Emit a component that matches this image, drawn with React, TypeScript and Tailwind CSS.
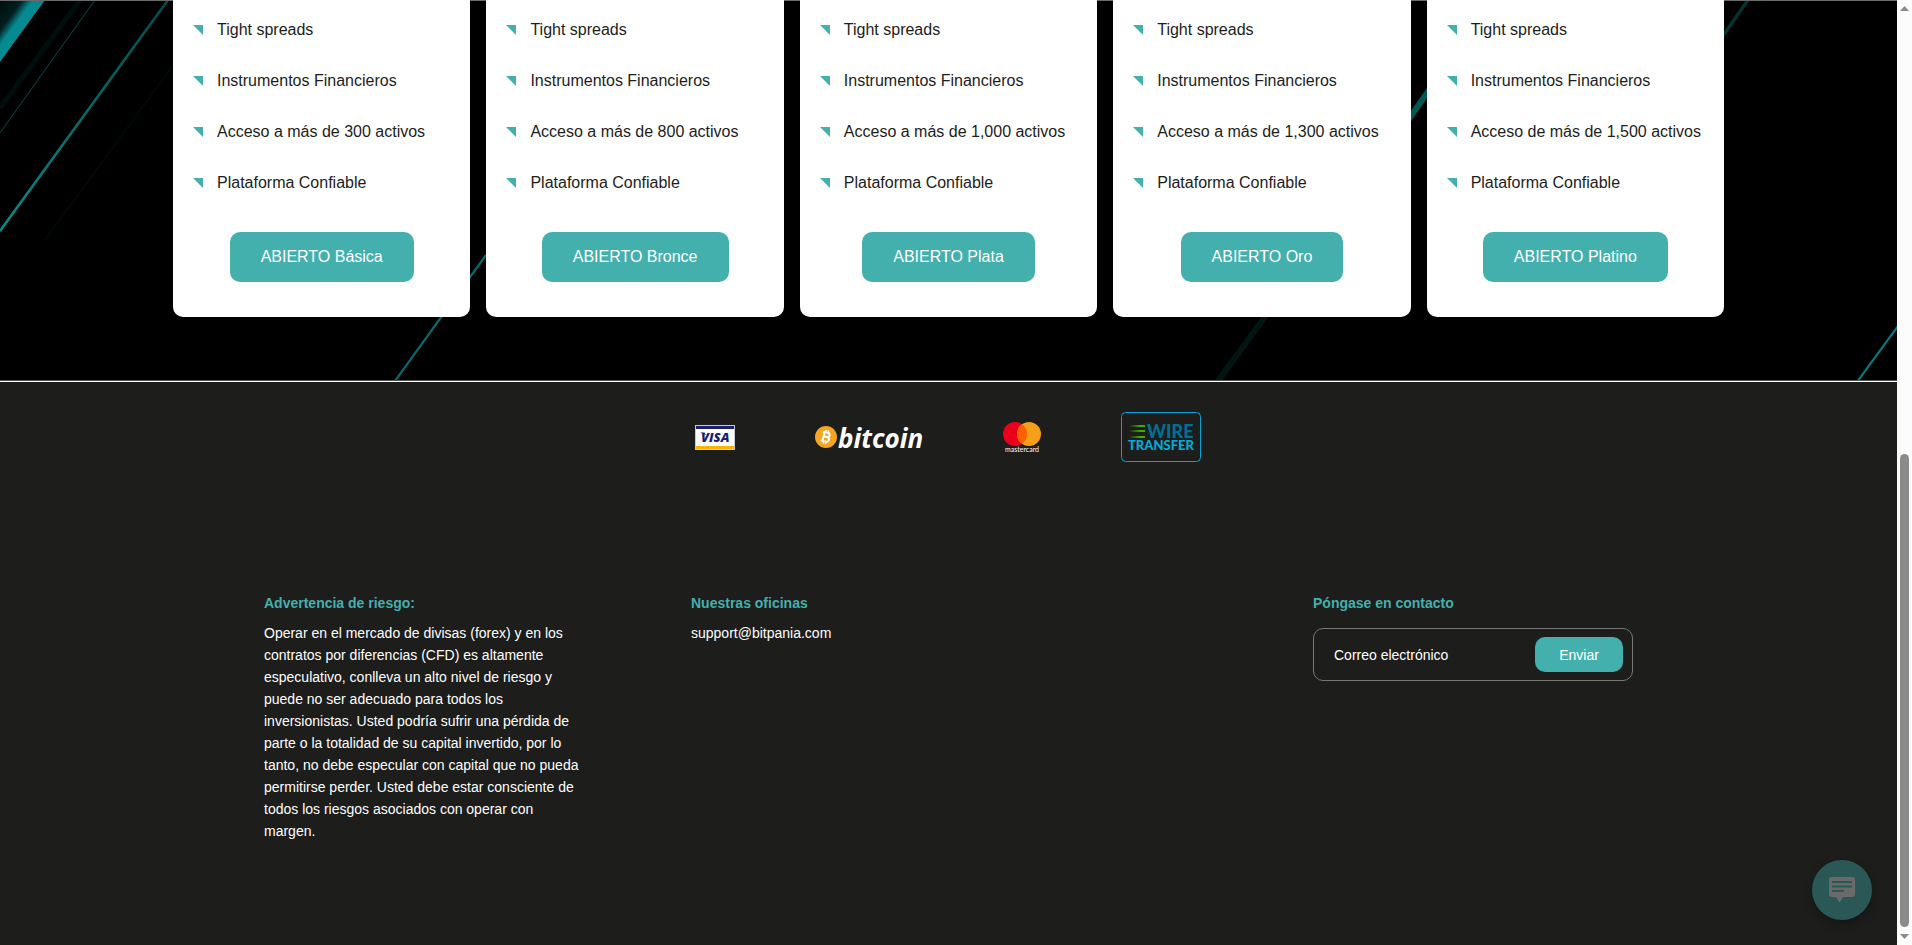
import { useState } from 'react';

const accounts = [
  { name: 'Básica', assets: 'Acceso a más de 300 activos' },
  { name: 'Bronce', assets: 'Acceso a más de 800 activos' },
  { name: 'Plata', assets: 'Acceso a más de 1,000 activos' },
  { name: 'Oro', assets: 'Acceso a más de 1,300 activos' },
  { name: 'Platino', assets: 'Acceso de más de 1,500 activos' },
];

const riskWarning =
  'Operar en el mercado de divisas (forex) y en los contratos por diferencias (CFD) es altamente especulativo, conlleva un alto nivel de riesgo y puede no ser adecuado para todos los inversionistas. Usted podría sufrir una pérdida de parte o la totalidad de su capital invertido, por lo tanto, no debe especular con capital que no pueda permitirse perder. Usted debe estar consciente de todos los riesgos asociados con operar con margen.';

function LightStreaks() {
  return (
    <svg
      className="absolute inset-0 h-full w-full"
      viewBox="0 0 1897 380"
      preserveAspectRatio="xMinYMin slice"
      aria-hidden="true"
    >
      <defs>
        <linearGradient id="beam" gradientUnits="userSpaceOnUse" x1="168" y1="0" x2="0" y2="231">
          <stop offset="0" stopColor="#064a49" />
          <stop offset="1" stopColor="#078a88" />
        </linearGradient>
        <linearGradient id="glow" gradientUnits="userSpaceOnUse" x1="0" y1="0" x2="29" y2="21">
          <stop offset="0" stopColor="#000b0b" />
          <stop offset="0.5" stopColor="#011f20" />
          <stop offset="0.75" stopColor="#058a92" />
          <stop offset="1" stopColor="#058a92" />
        </linearGradient>
      </defs>
      <polygon points="0,0 45,0 0,62" fill="url(#glow)" />
      <path d="M80 0L0 108" stroke="#000e0e" strokeWidth="5" />
      <path d="M95 0L0 133" stroke="#063a39" strokeWidth="1.2" />
      <path d="M172 67L45 240" stroke="#000a0a" strokeWidth="1.5" />
      <path d="M168 0L0 231" stroke="url(#beam)" strokeWidth="2.6" />
      <path d="M486 255L395 381" stroke="#066a70" strokeWidth="2.2" />
      <path d="M1267 314L1218 381" stroke="#011514" strokeWidth="6" />
      <path d="M1434 83L1404 126" stroke="#015752" strokeWidth="6" />
      <path d="M1748 0L1720 40" stroke="#043331" strokeWidth="3.5" />
      <path d="M1898 326L1857 382" stroke="#05777f" strokeWidth="2.2" />
      <path d="M0 0.5H1897" stroke="#6b6b6b" />
    </svg>
  );
}

function VisaLogo() {
  return (
    <svg width="40" height="25" viewBox="0 0 40 25" role="img" aria-label="Visa">
      <rect width="40" height="25" fill="#c9c9d2" />
      <rect x="1" y="1" width="38" height="23" fill="#fff" />
      <rect x="1" y="1" width="38" height="3" fill="#1a1f71" />
      <rect x="1" y="21" width="38" height="3" fill="#f7b600" />
      <text x="6" y="17" fontFamily="Open Sans, sans-serif" fontSize="13" fontWeight="800" fontStyle="italic" fill="#1a1f71">
        VISA
      </text>
      <path d="M5 7.5h4.500l1.500 2.500z" fill="#1a1f71" />
    </svg>
  );
}

function BitcoinLogo() {
  return (
    <svg width="108" height="25" viewBox="0 0 108 25" className="overflow-visible" role="img" aria-label="bitcoin">
      <circle cx="11" cy="12" r="11" fill="#f4a521" />
      <g transform="rotate(13 11 12)" fill="none" stroke="#fff">
        <path d="M8.500 7.500v9M6.500 7.500h5.200c3.200 0 3.200 4.300 0 4.300H8.500M11.700 11.800c3.800 0 3.800 4.700 0 4.700H6.500" strokeWidth="2" />
        <path d="M9.600 5v2.500M12 5v2.500M9.600 16.500v2.500M12 16.500v2.500" strokeWidth="1.400" />
      </g>
      <text x="23" y="23" fontFamily="Noto Sans, sans-serif" fontSize="26" fontWeight="700" fontStyle="italic" fill="#fff">
        bitcoin
      </text>
    </svg>
  );
}

function MastercardLogo() {
  return (
    <svg width="38" height="30" viewBox="0 0 38 30" className="overflow-visible" role="img" aria-label="mastercard">
      <circle cx="12" cy="12" r="12" fill="#eb001b" />
      <circle cx="26" cy="12" r="12" fill="#f79e1b" />
      <path d="M19 2.250a12 12 0 0 1 0 19.500a12 12 0 0 1 0-19.500z" fill="#ff5f00" />
      <text x="2" y="30" fontFamily="Lato, sans-serif" fontSize="7" fill="#fff">
        mastercard
      </text>
    </svg>
  );
}

function WireTransferLogo() {
  return (
    <svg width="80" height="50" viewBox="0 0 80 50" role="img" aria-label="Wire Transfer">
      <defs>
        <linearGradient id="dash" x1="0" x2="1">
          <stop offset="0" stopColor="#3fae00" stopOpacity="0" />
          <stop offset="0.7" stopColor="#3fae00" />
        </linearGradient>
      </defs>
      <rect x="0.500" y="0.500" width="79" height="49" rx="4" fill="none" stroke="#00a5d9" />
      <rect x="8" y="13" width="16" height="2" fill="url(#dash)" />
      <rect x="8" y="18" width="16" height="2" fill="url(#dash)" />
      <rect x="8" y="24" width="16" height="2" fill="url(#dash)" />
      <text fontFamily="Lato, sans-serif" fontWeight="900">
        <tspan x="26" y="26" fontSize="18" fill="#006f96">WIRE</tspan>
        <tspan x="7" y="38" fontSize="13" fill="#00acd9">TRANSFER</tspan>
      </text>
    </svg>
  );
}

function AccountCard({ name, assets }: { name: string; assets: string }) {
  const features = ['Tight spreads', 'Instrumentos Financieros', assets, 'Plataforma Confiable'];

  return (
    <article className="flex flex-1 flex-col items-center rounded-b-[10px] bg-white px-5 pt-[18px] pb-[35px]">
      <ul className="flex w-full flex-col gap-[27px]">
        {features.map((feature) => (
          <li key={feature} className="flex items-center gap-3.5 text-base whitespace-nowrap text-[#1d1d1b]">
            <svg width="10" height="10" viewBox="0 0 10 10" className="shrink-0" aria-hidden="true">
              <path d="M0 0h10v10z" fill="#43b0ae" />
            </svg>
            {feature}
          </li>
        ))}
      </ul>
      <button className="mt-[37px] h-[50px] rounded-[10px] bg-[#43b0ae] px-[31px] text-base text-white">
        ABIERTO {name}
      </button>
    </article>
  );
}

export default function App() {
  const [email, setEmail] = useState('');

  return (
    <div className="flex min-h-screen bg-[#1d1d1b] font-['Liberation_Sans',Arial,sans-serif]">
      <div className="flex min-w-0 flex-1 flex-col">
        {/* Account types */}
        <section className="relative bg-black pb-[63px]">
          <LightStreaks />
          <div className="relative mx-auto flex max-w-[1551px] gap-4">
            {accounts.map((account) => (
              <AccountCard key={account.name} {...account} />
            ))}
          </div>
        </section>

        {/* Footer */}
        <footer className="flex-1 border-t border-[#555555] text-sm leading-[22px] text-white">
          <div className="flex items-center justify-center gap-20 border-t border-white pt-[30px] pr-0.5">
            <VisaLogo />
            <BitcoinLogo />
            <MastercardLogo />
            <WireTransferLogo />
          </div>

          <div className="mx-auto mt-[130px] flex max-w-[1369px] justify-between">
            <div className="w-[320px]">
              <h4 className="font-bold text-[#43b0ae]">Advertencia de riesgo:</h4>
              <p className="mt-2">{riskWarning}</p>
            </div>
            <div className="w-[515px]">
              <h4 className="font-bold text-[#43b0ae]">Nuestras oficinas</h4>
              <a href="mailto:support@bitpania.com" className="mt-2 block">
                support@bitpania.com
              </a>
            </div>
            <div className="w-[320px]">
              <h4 className="font-bold text-[#43b0ae]">Póngase en contacto</h4>
              <form
                onSubmit={(e) => e.preventDefault()}
                className="mt-3.5 flex h-[53px] items-center rounded-[10px] border border-[#777777] pr-[9px] pl-5"
              >
                <input
                  type="email"
                  aria-label="Correo electrónico"
                  placeholder="Correo electrónico"
                  value={email}
                  onChange={(e) => setEmail(e.target.value)}
                  className="min-w-0 flex-1 bg-transparent outline-none placeholder:text-white"
                />
                <button type="submit" className="h-[35px] w-[88px] rounded-[10px] bg-[#43b0ae]">
                  Enviar
                </button>
              </form>
            </div>
          </div>
        </footer>
      </div>

      {/* Scroll track */}
      <div className="flex w-[15px] shrink-0 flex-col items-center bg-[#fcfcfc] py-1.5" aria-hidden="true">
        <svg width="9" height="5" viewBox="0 0 9 5">
          <path d="M4.500 0L9 5H0z" fill="#8b8b8b" />
        </svg>
        <div className="flex w-[9px] flex-1 flex-col py-[7px]">
          <div className="grow-[436] basis-0" />
          <div className="grow-[473] basis-0 rounded-full bg-[#8b8b8b]" />
        </div>
        <svg width="9" height="5" viewBox="0 0 9 5">
          <path d="M0 0H9L4.500 5z" fill="#8b8b8b" />
        </svg>
      </div>

      {/* Chat launcher */}
      <button
        aria-label="Chat"
        className="fixed right-10 bottom-[25px] flex size-[60px] items-center justify-center rounded-full bg-[#2a5857] shadow-[0_4px_10px_rgba(0,0,0,0.3)]"
      >
        <svg width="26" height="26" viewBox="0 0 26 26" aria-hidden="true">
          <path d="M3 0h20a3 3 0 0 1 3 3v14a3 3 0 0 1-3 3h-9l-3.500 5.500L7 20H3a3 3 0 0 1-3-3V3a3 3 0 0 1 3-3z" fill="#6a6a6a" />
          <path d="M3 5h20M3 9.500h20M3 14h12" stroke="#2a5857" strokeWidth="2" />
        </svg>
      </button>
    </div>
  );
}
